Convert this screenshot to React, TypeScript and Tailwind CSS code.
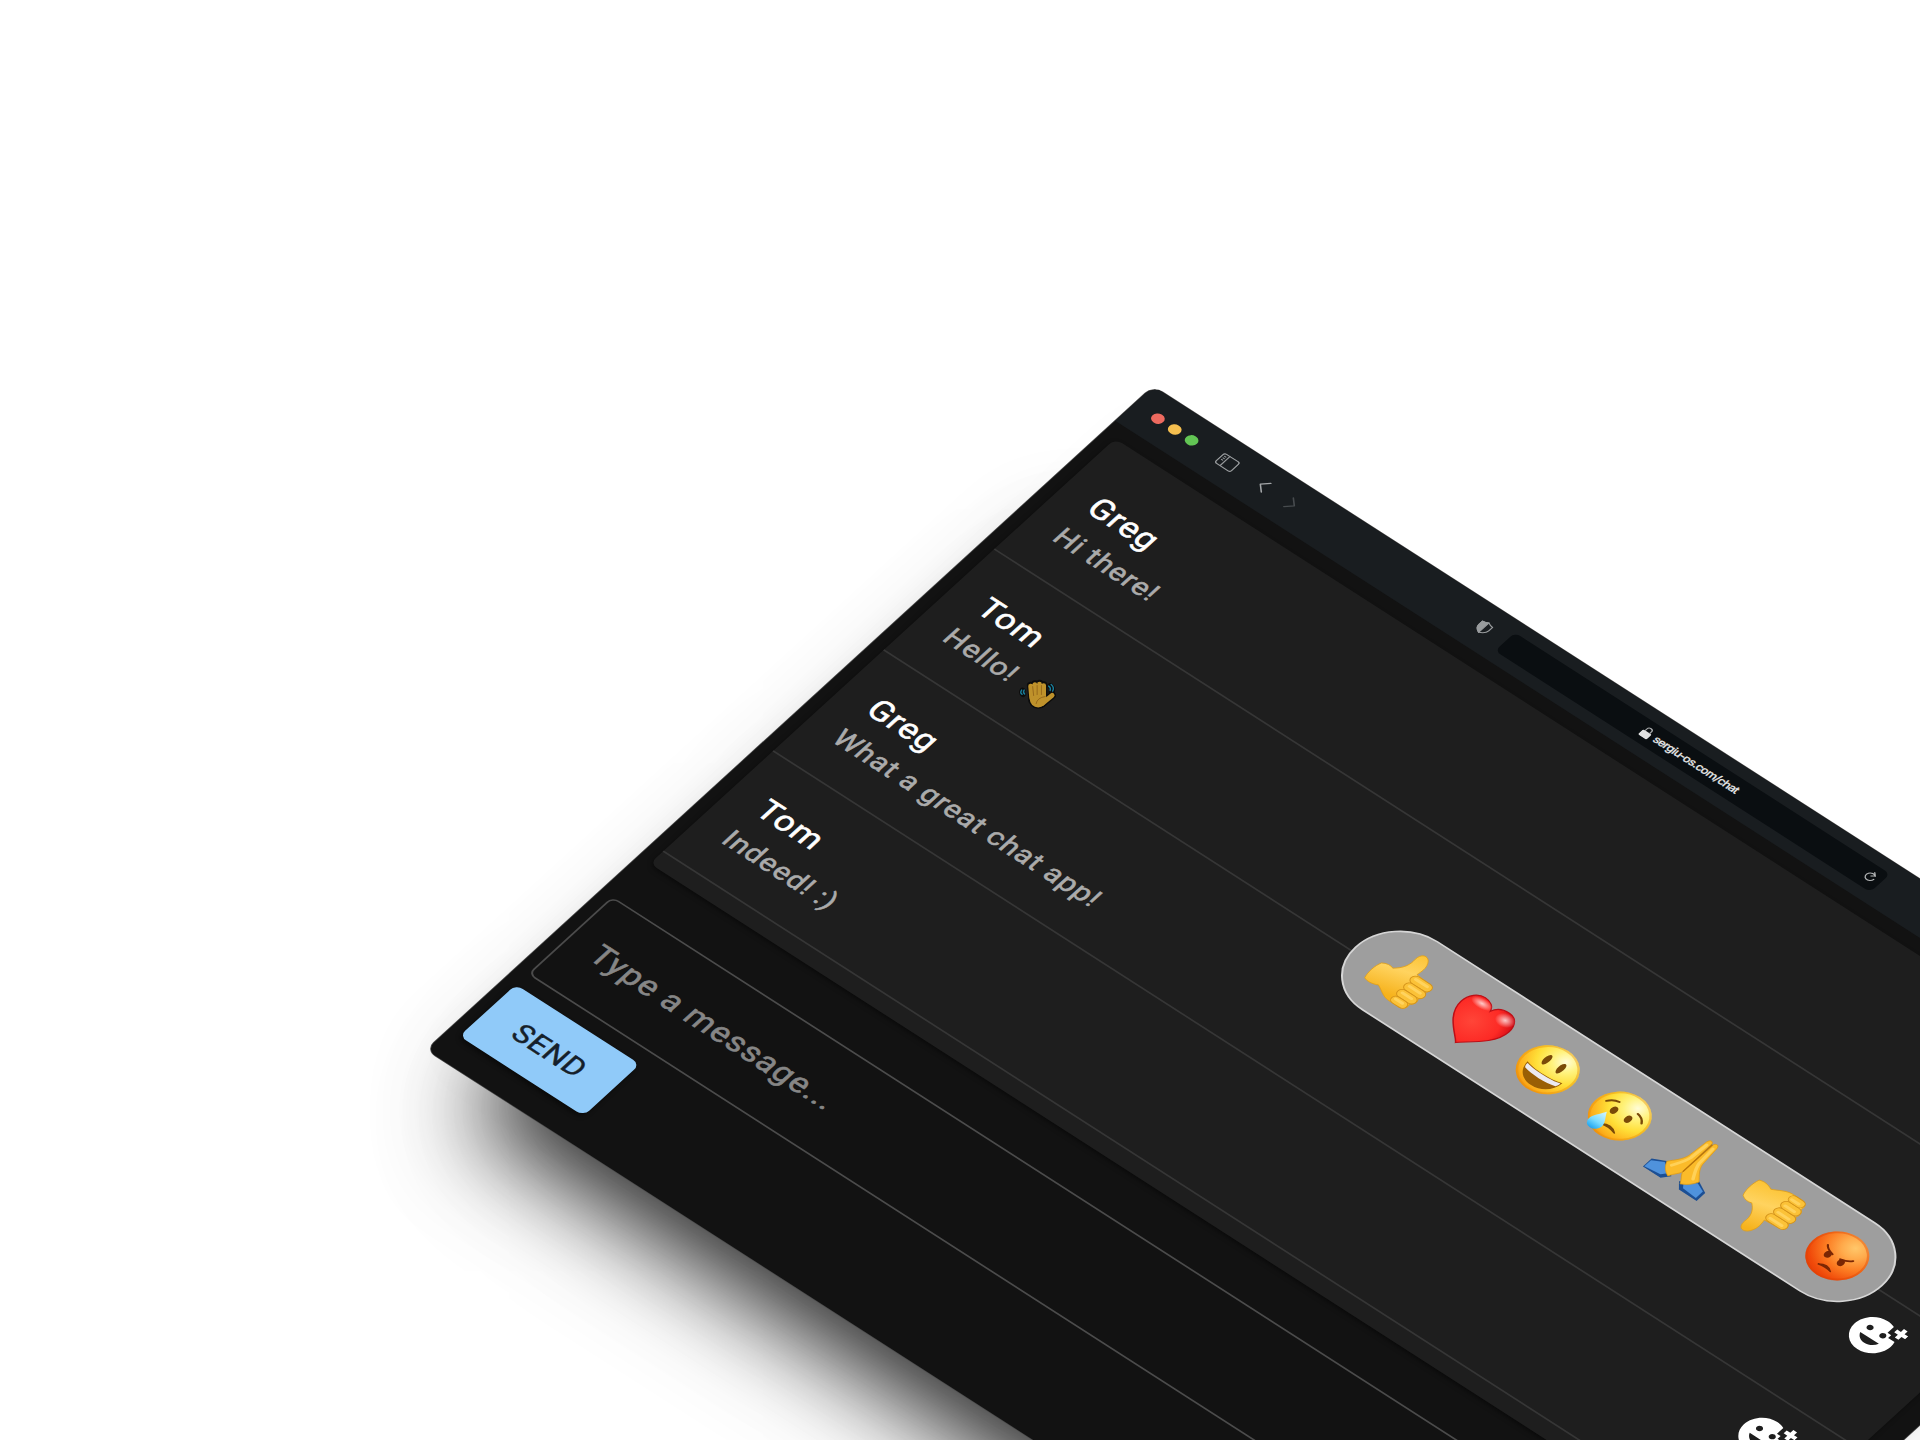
import React from "react";

const BROWN = "#7a4a08";

function Face({ kind }: { kind: "smile" | "cry" | "angry" }) {
  const angry = kind === "angry";
  return (
    <svg viewBox="-36 -36 72 72" className="size-[72px]">
      <defs>
        <radialGradient id={"face-" + kind} cx="0.62" cy="0.2" r="0.85">
          <stop offset="0" stopColor={angry ? "#ffc76a" : "#fffcd8"} />
          <stop offset="0.25" stopColor={angry ? "#ffab4c" : "#fff380"} />
          <stop offset="0.55" stopColor={angry ? "#fc7c22" : "#ffdf38"} />
          <stop offset="0.85" stopColor={angry ? "#f04a0a" : "#fdb01c"} />
          <stop offset="1" stopColor={angry ? "#e63c06" : "#f28f0c"} />
        </radialGradient>
        <linearGradient id="tear" x1="0" y1="0" x2="0" y2="1">
          <stop offset="0" stopColor="#d8f6ff" />
          <stop offset="0.6" stopColor="#7adcff" />
          <stop offset="1" stopColor="#1ea4f0" />
        </linearGradient>
      </defs>
      <circle r="32" fill={"url(#face-" + kind + ")"} />
      <circle r="30.8" fill="none" stroke={angry ? "#dc4406" : "#e58a08"} strokeOpacity="0.4" strokeWidth="2.400" />
      {kind === "smile" && (
        <g>
          <ellipse cx="-9" cy="-9.6" rx="3.3" ry="7.6" fill={BROWN} />
          <ellipse cx="9.2" cy="-9.6" rx="3.3" ry="7.6" fill={BROWN} />
          <path d="M-22.500 4.500C-12 8.500 12 8.500 22.500 4C22 17 13 26 0 26S-22 17-22.500 4.500Z" fill="#9a5f05" />
          <path d="M-21 6C-12 9 12 9 21 5.500C21.500 8 21 10 19.500 11.500C10 15-10 15-19.500 12C-21 10-21.500 8-21 6Z" fill="#eceaf0" />
        </g>
      )}
      {kind === "cry" && (
        <g>
          <ellipse cx="-9.3" cy="-2.2" rx="3.7" ry="5.200" fill={BROWN} />
          <ellipse cx="9" cy="-2.2" rx="3.7" ry="5.200" fill={BROWN} />
          <path d="M-23-6.500Q-19-13-12-13.800M23-6.500Q19-13 12-13.800" fill="none" stroke={BROWN} strokeWidth="2.400" strokeLinecap="round" />
          <path d="M-8 19.500Q1 12.500 10 20.500Q1 17-8 19.500Z" fill={BROWN} stroke={BROWN} strokeWidth="1.800" strokeLinejoin="round" />
          <path d="M-13.500 4C-10 11-5 16-5 22A8.500 8.500 0 0 1-22 22C-22 16-17 11-13.500 4Z" fill="url(#tear)" />
        </g>
      )}
      {angry && (
        <g fill="#7a2604" stroke="#7a2604">
          <ellipse cx="-8.600" cy="4.500" rx="3.800" ry="4.600" stroke="none" />
          <ellipse cx="8.400" cy="4.500" rx="3.800" ry="4.600" stroke="none" />
          <path d="M-16.500-5Q-13.500-.5-5 1.500M16.500-5Q13.500-.5 5 1.500" fill="none" strokeWidth="2.200" strokeLinecap="round" />
          <path d="M-8 20.300Q0 13.500 8 20.300Q0 18-8 20.300Z" strokeWidth="1.500" strokeLinejoin="round" />
        </g>
      )}
    </svg>
  );
}

function Thumb({ down = false }: { down?: boolean }) {
  const id = down ? "thumb-down" : "thumb-up";
  return (
    <svg viewBox="-36 -38 72 76" className={down ? "h-[76px] w-[72px] -scale-y-100" : "h-[76px] w-[72px]"}>
      <defs>
        <linearGradient id={id} x1="0" y1={down ? "1" : "0"} x2="0.3" y2={down ? "0" : "1"}>
          <stop offset="0" stopColor="#fbbf28" />
          <stop offset="0.5" stopColor="#ffd35f" />
          <stop offset="1" stopColor="#f6b21c" />
        </linearGradient>
      </defs>
      <path
        d="M-28 0C-24-3-19-4-15-2C-8-8-5-14-5-22C-7-37 4-38 8-29C11-23 10-17 9-11L27-9.500C34-8 33 0 30 1C34 3 34 11 30 12C33 15 32 22 28 23C30 27 28 33 22 33H9C1 33-5 27-12 24C-17 27-24 28-28.500 25.500C-31 18-31 7-28 0Z"
        fill={"url(#" + id + ")"}
        stroke="#e0a01c"
        strokeWidth="0.900"
      />
      <g fill="#fbc238" stroke="#d3921a" strokeWidth="1">
        <rect x="7" y="-10" width="26" height="11" rx="5.500" />
        <rect x="8" y="1" width="25.500" height="11" rx="5.500" />
        <rect x="8" y="12" width="23.500" height="11" rx="5.500" />
        <rect x="9" y="23" width="19" height="10" rx="5" />
      </g>
      <g stroke="#ffd35e" strokeWidth="3.500" strokeLinecap="round">
        <path d="M12-5.500H27M13 5.500H27M13 16.500H25M13 27H22" />
      </g>
    </svg>
  );
}

function Heart() {
  return (
    <svg viewBox="-36 -36 72 72" className="size-[72px] overflow-visible">
      <defs>
        <radialGradient id="heart" cx="0.4" cy="0.5" r="0.65">
          <stop offset="0" stopColor="#ff4538" />
          <stop offset="0.7" stopColor="#fd2a25" />
          <stop offset="1" stopColor="#d80f17" />
        </radialGradient>
        <radialGradient id="heart-shine" cx="0.5" cy="0.5" r="0.5">
          <stop offset="0" stopColor="#fff" stopOpacity="0.75" />
          <stop offset="1" stopColor="#fff" stopOpacity="0" />
        </radialGradient>
      </defs>
      <g transform="translate(2 -3)">
        <path
          d="M-.5 35C-5 28-31 13-31-10C-31-21-24-29-15.500-29C-8-29-2-25 0-18.500C2-25 8-29 16-29C25-29 31.500-21 31.500-10C31.500 12 6 27-.5 35Z"
          fill="url(#heart)"
          stroke="#bd0e15"
          strokeWidth="1.500"
        />
        <ellipse cx="-13" cy="-21" rx="13" ry="6.500" fill="url(#heart-shine)" />
        <ellipse cx="19" cy="-19" rx="11" ry="9" fill="url(#heart-shine)" />
      </g>
    </svg>
  );
}

function FoldedHands() {
  return (
    <svg viewBox="-36 -36 72 72" className="size-[72px]">
      <path d="M-20 14L-35 22V35.500L-12 35.500L-5 27Z" fill="#1c4f94" />
      <path d="M20 14L35 22V35.500L12 35.500L5 27Z" fill="#1c4f94" />
      <path d="M-22 17L-34 24V34.500L-15 32L-10 26Z" fill="#4f92dc" />
      <path d="M21 17L32 22V33L14 31.500L10 26Z" fill="#4f92dc" />
      <path d="M-1-32C-4-36-7-33-7-27L-9-5C-11 4-16 8-21 15C-18 22-14 26-8 29C-5 22-1 20 0 15Z" fill="#fbbb2a" stroke="#e09c14" strokeWidth="0.800" />
      <path d="M1-32C4-36 7-33 7-27L9-5C11 4 16 8 21 15C18 22 14 26 8 29C5 22 1 20 0 15Z" fill="#fbbb2a" stroke="#e09c14" strokeWidth="0.800" />
      <path d="M-4-27L-5.500-4C-7 4-11 10-14 16M4-27L5.500-4C7 4 11 10 14 16" fill="none" stroke="#ffd158" strokeWidth="3.500" strokeLinecap="round" />
      <path d="M0-31V15" stroke="#b8740a" strokeWidth="1.500" />
    </svg>
  );
}

/* The hand stays upright on the tilted plane, so its drawing is counter-rotated. */
function WavingHand() {
  return (
    <svg viewBox="-24 -24 48 48" className="h-[48px] w-[48px] overflow-visible">
      <g transform="matrix(.766 -.6428 .8391 1 0 0)" fill="none" strokeLinecap="round">
        <g stroke="#0c0c0c" strokeWidth="7.500">
          <path d="M-6.500-9L-5 3M-2-10.500L-1.500 2M2.500-11L2.500 2M6.500-9.500L6.500 4M5 9L15 .8" />
          <circle cx="1" cy="4" r="6.500" fill="#0c0c0c" />
          <path d="M-14.500-4Q-16-2-14-.5M13-8.500Q16-6 14.500-3" strokeWidth="6" />
        </g>
        <g stroke="#bf922b" strokeWidth="4.800">
          <path d="M-6.500-8.500L-5.500 3M-2.300-10L-1.500 2M2.300-10.300L2.300 2M6.500-9L6.500 4M5 9L15 .8" />
          <circle cx="1" cy="4.500" r="6" fill="#bf922b" />
        </g>
        <path d="M-4.500-8L-3.500 1M0-9L0 0M4.300-9L4.300 0M-1 9Q0 3 8 2" stroke="#94651a" strokeWidth="0.900" />
        <path d="M-13-4.500Q-14.500-2.500-12.500-.5M-15.500-4.500Q-17.500-1.500-15-.3M11.500-8.500Q14-7 13-4M14-10Q17.500-7 15.500-3.500" stroke="#1a7e9c" strokeWidth="1.400" />
      </g>
    </svg>
  );
}

function AddReaction() {
  return (
    <svg viewBox="0 0 24 24" className="size-[57px] fill-white">
      <path d="M18 9V7h-2V2.840C14.770 2.300 13.420 2 11.990 2 6.470 2 2 6.480 2 12s4.470 10 9.990 10C17.520 22 22 17.520 22 12c0-1.050-.17-2.050-.47-3zm-2.500-1c.83 0 1.500.67 1.500 1.500s-.67 1.500-1.500 1.500-1.500-.67-1.500-1.500.67-1.500 1.500-1.500m-7 0c.83 0 1.500.67 1.500 1.500S9.330 11 8.500 11 7 10.330 7 9.500 7.670 8 8.500 8m3.500 9.500c-2.330 0-4.310-1.460-5.110-3.500h10.220c-.8 2.040-2.780 3.500-5.110 3.500M22 3h2v2h-2v2h-2V5h-2V3h2V1h2z" />
    </svg>
  );
}

function Toolbar() {
  return (
    <header className="flex h-[58.500px] shrink-0 items-center bg-[#191d20]">
      <div className="flex w-[484px] items-center pl-[24px]">
        <div className="flex gap-[8.700px]">
          <span className="size-[13.500px] rounded-full bg-[#ed6a5f]" />
          <span className="size-[13.500px] rounded-full bg-[#f5bf4f]" />
          <span className="size-[13.500px] rounded-full bg-[#62c554]" />
        </div>
        <svg viewBox="0 0 22 18" className="ml-[28px] h-[18px] w-[22px]" fill="none" stroke="#989b9d" strokeWidth="1.400">
          <rect x="1" y="1" width="20" height="15.500" rx="2.500" />
          <path d="M8 1V16.500" />
          <path d="M3.300 4.300H5.900M3.300 6.800H5.900M3.300 9.300H5.900" strokeWidth="1.100" />
        </svg>
        <svg viewBox="0 0 10 18" className="ml-[31px] h-[18px] w-[10px]" fill="none" stroke="#a3a6a8" strokeWidth="1.600" strokeLinecap="round" strokeLinejoin="round">
          <path d="M8.800 1.600L1.300 9L8.800 16.400" />
        </svg>
        <svg viewBox="0 0 10 18" className="ml-[27px] h-[18px] w-[10px]" fill="none" stroke="#474b4e" strokeWidth="1.600" strokeLinecap="round" strokeLinejoin="round">
          <path d="M1.200 1.600L8.700 9L1.200 16.400" />
        </svg>
        <svg viewBox="0 0 16 18" className="mr-[20px] ml-auto h-[18px] w-[16px]" fill="none" stroke="#989b9d" strokeWidth="1.300">
          <path d="M8 1C10 2.300 12 3 14.500 3.200V9C14.500 13 11 15.500 8 17C5 15.500 1.500 13 1.500 9V3.200C4 3 6 2.300 8 1Z" />
          <path d="M8 1V17C5 15.500 1.500 13 1.500 9V3.200C4 3 6 2.300 8 1Z" fill="#989b9d" />
        </svg>
      </div>
      <div className="flex h-[31.500px] w-[489.500px] items-center rounded-[7px] bg-[#0a0e11]">
        <svg viewBox="0 0 12 16" className="ml-[178.500px] h-[16px] w-[12px]">
          <rect x="0.500" y="7" width="11" height="8.500" rx="1.500" fill="#dfe0e0" />
          <path d="M3 7.500V4.500A3 3 0 0 1 9 4.500V7.500" fill="none" stroke="#a5a7a8" strokeWidth="1.400" />
        </svg>
        <span className="ml-[5px] font-['Inter'] text-[13px] font-medium tracking-[-0.750px] whitespace-nowrap text-[#e6e7e7] [-webkit-text-stroke:0.250px]">
          sergiu-os.com/chat
        </span>
        <svg viewBox="0 0 14 16" className="mr-[6px] ml-auto h-[16px] w-[14px]" fill="none" stroke="#b3b5b6" strokeWidth="1.300" strokeLinecap="round">
          <path d="M10.500 5.200A5 5 0 1 0 12 9M7 1.500L10.300 4.700L7 7.600" />
        </svg>
      </div>
    </header>
  );
}

const messages = [
  { name: "Greg", text: "Hi there!" },
  { name: "Tom", text: "Hello!", wave: true },
  { name: "Greg", text: "What a great chat app!" },
  { name: "Tom", text: "Indeed! :)" },
];

function Reactions() {
  return (
    <div className="absolute top-[295.500px] left-[610px] flex h-[118px] w-[689px] items-center rounded-full border-2 border-[#d6d6d6] bg-[#9e9e9e] pb-[2px] pl-[24px] [&>svg]:mr-[22.600px] [&>svg]:shrink-0">
      <Thumb />
      <Heart />
      <Face kind="smile" />
      <Face kind="cry" />
      <FoldedHands />
      <Thumb down />
      <Face kind="angry" />
    </div>
  );
}

export default function App() {
  return (
    <main className="relative h-screen w-full overflow-hidden bg-white font-['Roboto',sans-serif]">
      <section className="absolute top-0 left-0 flex h-[1131px] w-[1459px] origin-top-left [transform:matrix(0.76604,0.49240,-0.64279,0.58682,1153.1,386.1)] flex-col overflow-hidden rounded-[12px] bg-[#121212] shadow-[0_0_0_0.800px_#4c4c4c,0_122px_106px_-82px_rgba(0,0,0,0.800),0_140px_150px_-80px_rgba(0,0,0,0.100),0_14px_60px_rgba(0,0,0,0.012)]">
        <Toolbar />
        <div className="relative mt-[18px] mr-[27px] ml-[14.500px] rounded-[9px] bg-[#1e1e1e] pt-[18px] pb-[20px] shadow-[0_3px_6px_-1px_rgba(0,0,0,0.500)]">
          <ul>
            {messages.map((m, i) => (
              <li key={i} className="flex h-[171.700px] items-start border-b-2 border-[#363636] pl-[36px]">
                <div className="mt-[35px] flex-1">
                  <p className="ml-[2px] text-[36.500px] leading-[54px] tracking-[1.300px] text-white [-webkit-text-stroke:0.700px]">{m.name}</p>
                  <p className="mt-[2px] flex h-[45px] items-center text-[31.500px] leading-[45px] tracking-[1.120px] text-[#ababab] [-webkit-text-stroke:0.700px]">
                    {m.text}
                    {m.wave && (
                      <span className="mt-[6px] ml-[8px]">
                        <WavingHand />
                      </span>
                    )}
                  </p>
                </div>
                <button className="mt-[20px] mr-[56px]">
                  <AddReaction />
                </button>
              </li>
            ))}
          </ul>
          <Reactions />
        </div>
        <form className="mt-[57px] flex flex-col items-start px-[13.500px]">
          <div className="flex h-[132px] w-full items-center rounded-[9px] border-2 border-[#4b4b4b] pl-[31px] text-[36px] tracking-[1.300px] text-[#868686] [-webkit-text-stroke:0.700px]">
            Type a message...
          </div>
          <button className="mt-[18px] h-[88px] w-[162px] rounded-[9px] bg-[#90caf9] pl-[2px] text-[33px] tracking-[0.900px] text-[#15202a] shadow-[0_4px_6px_rgba(0,0,0,0.450)] [-webkit-text-stroke:0.500px]">
            SEND
          </button>
        </form>
      </section>
    </main>
  );
}
